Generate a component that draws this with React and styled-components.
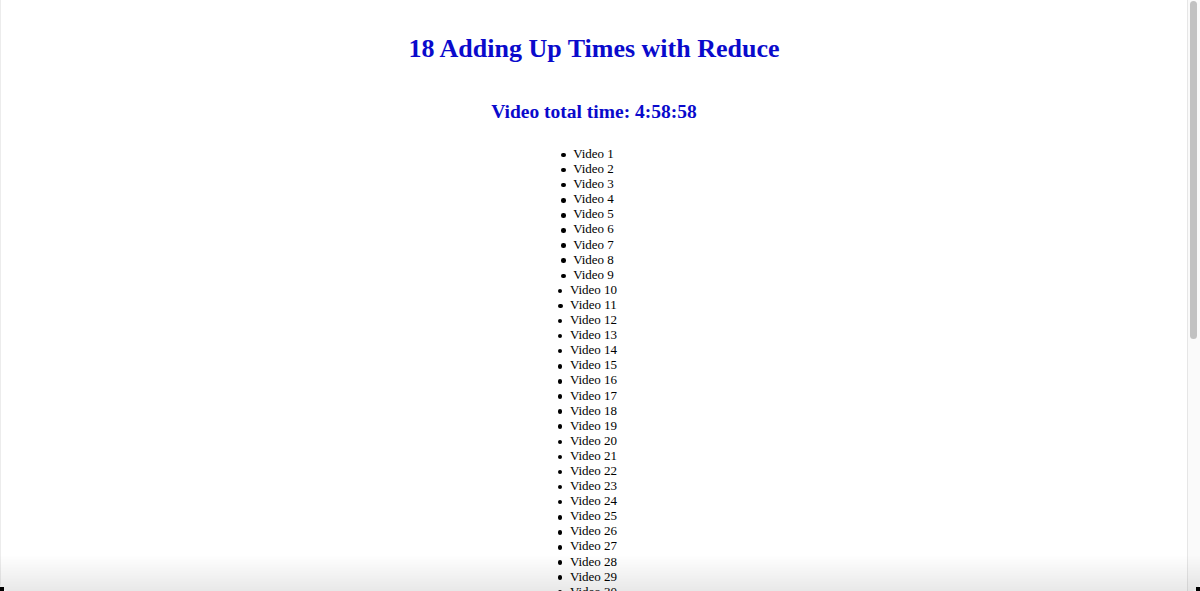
import React from 'react'
import styled, { createGlobalStyle } from 'styled-components'

const GlobalStyle = createGlobalStyle`
    html, body {
        margin: 0;
        padding: 0;
        overflow: hidden;
        background: #fff;
        font-family: "Liberation Serif", "Times New Roman", serif;
    }
`;

const videos = Array.from({ length: 58 }, (_, i) => `Video ${i + 1}`);

function App() {
  return (
    <>
      <GlobalStyle />
      <Page>
        <Title>18 Adding Up Times with Reduce</Title>
        <Total>Video total time: 4:58:58</Total>
        <VideoList>
          {videos.map((v) => (
            <VideoItem key={v}>{v}</VideoItem>
          ))}
        </VideoList>
      </Page>
      <Scrollbar>
        <Thumb />
      </Scrollbar>
      <BottomShade />
    </>
  )
}

const Page = styled.div`
    width: 1187px;
    padding-top: 34px;
    text-align: center;
    border-left: 1px solid #ececec;
    box-sizing: border-box;
`;

const Title = styled.h1`
    margin: 0 0 37px;
    font-size: 26px;
    line-height: 30px;
    font-weight: bold;
    color: #0a0acc;
`;

const Total = styled.h2`
    margin: 0 0 23px;
    font-size: 19.5px;
    line-height: 22px;
    font-weight: bold;
    color: #0a0acc;
`;

const VideoList = styled.ul`
    margin: 0;
    padding: 0 13px 0 0;
    list-style: none;
`;

const VideoItem = styled.li`
    font-size: 13px;
    line-height: 15.1px;
    color: #000;

    &::before {
        content: '';
        display: inline-block;
        width: 4.5px;
        height: 4.5px;
        border-radius: 50%;
        background: #000;
        margin-right: 7.5px;
        vertical-align: middle;
    }
`;

const Scrollbar = styled.div`
    position: fixed;
    top: 0;
    right: 0;
    width: 12px;
    height: 100%;
    background: #fafafa;
    border-left: 1px solid #e6e6e6;
`;

const Thumb = styled.div`
    margin: 1px 0 0 2px;
    width: 7px;
    height: 338px;
    border-radius: 4px;
    background: #c2c2c2;
`;

const BottomShade = styled.div`
    position: fixed;
    left: 0;
    right: 0;
    bottom: 0;
    height: 36px;
    pointer-events: none;
    background: linear-gradient(to bottom, rgba(0,0,0,0), rgba(0,0,0,0.09));
    border-radius: 0 0 8px 8px;

    &::before, &::after {
        content: '';
        position: absolute;
        bottom: 0;
        width: 4px;
        height: 4px;
        background: #000;
    }
    &::before { left: 0; }
    &::after { right: 0; }
`;

export default App
